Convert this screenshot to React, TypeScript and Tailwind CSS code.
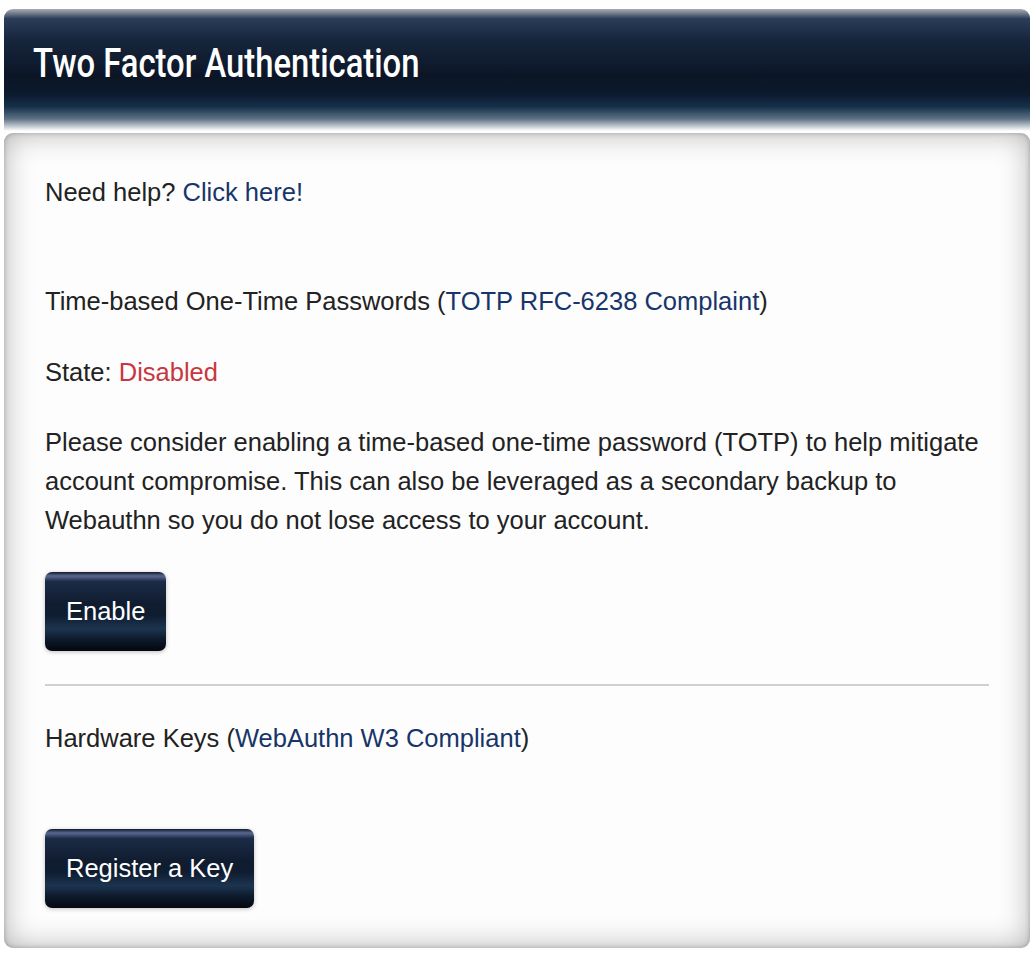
const body = { fontFamily: '"Liberation Sans", Arial, sans-serif' };

function GlossButton({ children }: { children: string }) {
  return (
    <button
      className="h-[79px] rounded-[7px] px-[21px] text-[25.5px] text-white shadow-[0_1px_4px_rgba(0,0,0,0.25)] bg-[linear-gradient(to_bottom,#0e1a2e_0%,#5a6890_5%,#1c2c46_12%,#101c30_40%,#0f1d31_55%,#1c3450_72%,#0e1a2c_85%,#03070f_100%)]"
      style={body}
    >
      {children}
    </button>
  );
}

export default function App() {
  return (
    <div className="min-h-screen bg-white px-1 pt-[9px] text-[#222]" style={body}>
      <div className="flex h-[122px] items-start rounded-t-[9px] bg-[linear-gradient(to_bottom,#a9aeb4_0%,#2a3d59_8%,#17263c_25%,#0b1526_55%,#0c1a2d_70%,#143049_80%,#5d7184_90%,#dfe4e8_98%,#ffffff_100%)] px-[29px] pt-[31px]">
        <h1
          className="origin-left scale-x-[0.82] whitespace-nowrap text-[40px] leading-[48px] font-medium text-white"
          style={{ fontFamily: 'Roboto, "Open Sans", sans-serif' }}
        >
          Two Factor Authentication
        </h1>
      </div>
      <div className="mt-[2px] h-[815px] rounded-[9px] bg-[#fdfdfd] px-[41px] pt-[34px] text-[25.5px] leading-[39px] shadow-[inset_0_0_30px_rgba(0,0,0,0.3),inset_0_0_5px_rgba(0,0,0,0.25)]">
        <p className="mt-[6px]">
          Need help? <a className="text-[#17356a]">Click here!</a>
        </p>
        <p className="mt-[70px]">
          Time-based One-Time Passwords (<a className="text-[#17356a]">TOTP RFC-6238 Complaint</a>)
        </p>
        <p className="mt-[32px]">
          State: <span className="text-[#c8373f]">Disabled</span>
        </p>
        <p className="mt-[31px]">
          Please consider enabling a time-based one-time password (TOTP) to help mitigate account compromise. This can
          also be leveraged as a secondary backup to Webauthn so you do not lose access to your account.
        </p>
        <div className="mt-[32px]">
          <GlossButton>Enable</GlossButton>
        </div>
        <hr className="mt-[33px] border-t-2 border-[#d0d0d0]" />
        <p className="mt-[33px]">
          Hardware Keys (<a className="text-[#17356a]">WebAuthn W3 Compliant</a>)
        </p>
        <div className="mt-[71px]">
          <GlossButton>Register a Key</GlossButton>
        </div>
      </div>
    </div>
  );
}
